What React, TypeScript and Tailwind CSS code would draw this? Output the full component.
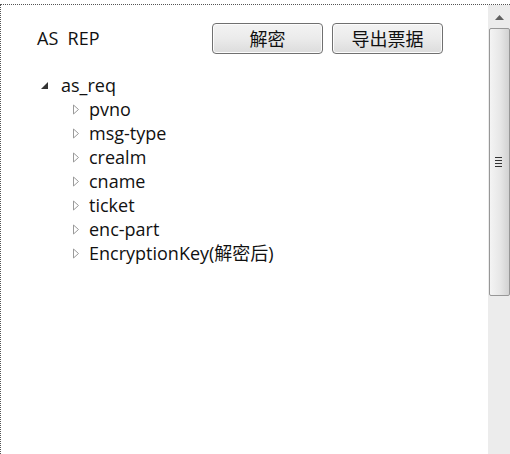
const children = ["pvno", "msg-type", "crealm", "cname", "ticket", "enc-part", "EncryptionKey(解密后)"];

const font = { fontFamily: '"Open Sans", "Noto Sans CJK SC", sans-serif' };

function Expanded() {
  return (
    <svg width="9" height="9" viewBox="0 0 9 9" className="shrink-0">
      <path d="M8 1 L8 8 L1 8 Z" fill="#333" />
    </svg>
  );
}

function Collapsed() {
  return (
    <svg width="8" height="11" viewBox="0 0 8 11" className="shrink-0">
      <path d="M1.5 1 L6.5 5.5 L1.5 10 Z" fill="none" stroke="#9a9a9a" strokeWidth="1" />
    </svg>
  );
}

function Btn({ label }: { label: string }) {
  return (
    <button className="w-[111px] h-[31px] rounded-[4px] border border-[#707070] bg-gradient-to-b from-[#f3f3f3] via-[#ebebeb] to-[#dcdcdc] text-[18px] leading-none text-[#111] shadow-[inset_0_0_0_1px_#fcfcfc]">
      {label}
    </button>
  );
}

export default function App() {
  return (
    <div className="w-[510px] h-[454px] bg-white pt-[4px] overflow-hidden" style={font}>
      <div className="flex h-[450px] border-t border-dotted border-[#555]">
        <div className="flex-1 border-l border-dotted border-[#555]">
          <div className="flex items-center pl-[36px] pt-[18px]">
            <span className="text-[18px] text-[#111] w-[175px]">AS&nbsp;&nbsp;REP</span>
            <div className="flex gap-[9px]">
              <Btn label="解密" />
              <Btn label="导出票据" />
            </div>
          </div>
          <div className="mt-[19px] pl-[39px] text-[18px] text-[#111]">
            <div className="flex items-center h-[24px] gap-[12px]">
              <Expanded />
              <span>as_req</span>
            </div>
            {children.map((c) => (
              <div key={c} className="flex items-center h-[24px] gap-[9px] pl-[32px]">
                <Collapsed />
                <span>{c}</span>
              </div>
            ))}
          </div>
        </div>
        <div className="w-[22px] bg-[#ececec] flex flex-col items-stretch">
          <div className="h-[23px] flex items-center justify-center pt-[2px]">
            <svg width="9" height="5" viewBox="0 0 9 5">
              <path d="M0 5 L4.5 0 L9 5 Z" fill="#606060" />
            </svg>
          </div>
          <div className="h-[268px] ml-[1px] rounded-[2px] border border-[#979797] bg-gradient-to-r from-[#f4f4f4] via-[#e8e8e8] to-[#d2d2d2] flex items-center justify-center">
            <div className="flex flex-col gap-[2px] -ml-[2px]">
              <div className="w-[7px] h-[1px] bg-[#333]" />
              <div className="w-[7px] h-[1px] bg-[#333]" />
              <div className="w-[7px] h-[1px] bg-[#333]" />
              <div className="w-[7px] h-[1px] bg-[#333]" />
            </div>
          </div>
        </div>
      </div>
    </div>
  );
}
